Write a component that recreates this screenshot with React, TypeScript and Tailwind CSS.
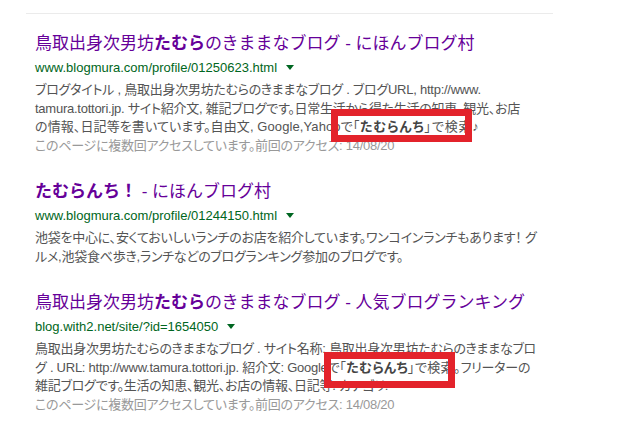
import React from "react";

const FONT = "[font-family:'Liberation_Sans','Noto_Sans_CJK_JP',sans-serif]";

function Arrow() {
  return (
    <span className="inline-block ml-[9px] w-0 h-0 border-l-[4px] border-r-[4px] border-t-[5px] border-l-transparent border-r-transparent border-t-[#006621] align-middle relative top-[-1px]" />
  );
}

function Result({
  title,
  url,
  lines,
  visited,
}: {
  title: React.ReactNode;
  url: string;
  lines: React.ReactNode[];
  visited?: boolean;
}) {
  return (
    <div className="mb-[26px]">
      <div className="h-[22px] leading-[22px] text-[17px] text-[#660099] whitespace-nowrap">{title}</div>
      <div className="mt-[4px] h-[18px] leading-[18px] text-[13px] text-[#006621] whitespace-nowrap">
        {url}
        <Arrow />
      </div>
      <div className="mt-[4px] text-[13px] leading-[18.5px] text-[#545454] [font-feature-settings:'palt'] tracking-[-0.25px]">
        {lines.map((l, i) => (
          <div key={i} className="whitespace-nowrap">
            {l}
          </div>
        ))}
        {visited && (
          <div className="whitespace-nowrap text-[#999999]">
            このページに複数回アクセスしています。前回のアクセス: 14/08/20
          </div>
        )}
      </div>
    </div>
  );
}

function Quote({ tail, wide }: { tail: string; wide?: boolean }) {
  return (
    <span className={wide ? "tracking-[0.8px]" : "tracking-[0.3px]"}>
      「<b className="font-bold text-[#444]">たむらんち</b>」{tail}
    </span>
  );
}

export default function App() {
  return (
    <div className={`relative w-[640px] h-[434px] bg-white overflow-hidden ${FONT}`}>
      <div className="pt-[13px]">
        <div className="ml-[26px] w-[527px] h-px bg-[#ebebeb]" />
        <div className="pl-[35px] pt-[19px]">
          <Result
            title={
              <>
                鳥取出身次男坊<b className="font-bold">たむら</b>のきままなブログ - にほんブログ村
              </>
            }
            url="www.blogmura.com/profile/01250623.html"
            lines={[
              <>ブログタイトル , 鳥取出身次男坊たむらのきままなブログ . ブログURL, http://www.</>,
              <>tamura.tottori.jp. サイト紹介文, 雑記ブログです。日常生活から得た生活の知恵、観光、お店</>,
              <>
                <span className="tracking-[0.1px]">の情報、日記等を書いています。自由文, Google,Yahooで</span>
                <Quote tail="で検索♪" wide />
              </>,
            ]}
            visited
          />
          <Result
            title={
              <>
                <b className="font-bold">たむらんち！</b> - にほんブログ村
              </>
            }
            url="www.blogmura.com/profile/01244150.html"
            lines={[
              <>池袋を中心に、安くておいしいランチのお店を紹介しています。ワンコインランチもあります！ グ</>,
              <>ルメ,池袋食べ歩き,ランチなどのブログランキング参加のブログです。</>,
            ]}
          />
          <Result
            title={
              <>
                鳥取出身次男坊<b className="font-bold">たむら</b>のきままなブログ - 人気ブログランキング
              </>
            }
            url="blog.with2.net/site/?id=1654050"
            lines={[
              <>鳥取出身次男坊たむらのきままなブログ . サイト名称: 鳥取出身次男坊たむらのきままなブロ</>,
              <>
                グ . URL: http://www.tamura.tottori.jp. 紹介文: Googleで<Quote tail="で検索。" />フリーターの
              </>,
              <>雑記ブログです。生活の知恵、観光、お店の情報、日記等. カテゴリ:</>,
            ]}
            visited
          />
        </div>
      </div>
      <div className="absolute left-[331px] top-[109px] w-[141px] h-[33px] border-[7px] border-[#e3232b]" />
      <div className="absolute left-[324px] top-[352px] w-[131px] h-[36px] border-[7px] border-[#e3232b]" />
    </div>
  );
}
